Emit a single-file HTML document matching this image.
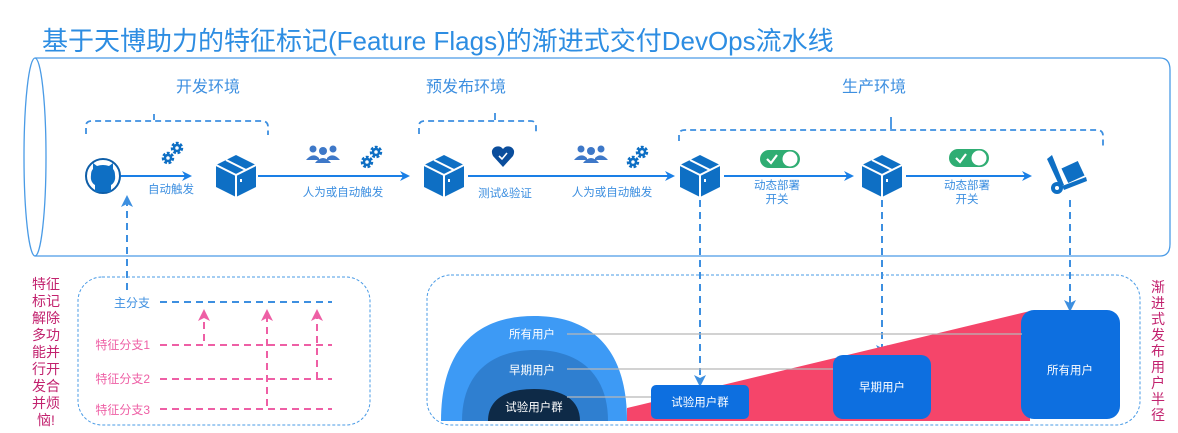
<!DOCTYPE html>
<html><head><meta charset="utf-8"><style>
html,body{margin:0;padding:0;background:#fff;}
svg{display:block;font-family:"Liberation Sans","Noto Sans CJK SC",sans-serif;}
</style></head><body>
<svg width="1178" height="433" viewBox="0 0 1178 433" xmlns="http://www.w3.org/2000/svg">
<defs>
<marker id="ab" markerWidth="10" markerHeight="10" refX="8" refY="5" orient="auto" markerUnits="userSpaceOnUse"><path d="M0,0 L10,5 L0,10 L3,5 Z" fill="#1a7fe6"/></marker>
<marker id="ap" markerWidth="12" markerHeight="12" refX="9" refY="6" orient="auto" markerUnits="userSpaceOnUse"><path d="M0,0 L12,6 L0,12 L3,6 Z" fill="#ee5fa5"/></marker>
<marker id="ad" markerWidth="12" markerHeight="12" refX="9" refY="6" orient="auto" markerUnits="userSpaceOnUse"><path d="M0,0 L12,6 L0,12 L3,6 Z" fill="#3d8fe0"/></marker>
<g id="box"><path d="M0,-20 L20,-10 L20,12 L0,22 L-20,12 L-20,-10 Z" fill="#0e6fc4"/><path d="M-20,-10 L0,0 L20,-10 M0,0 L0,22" stroke="#fff" stroke-width="2" fill="none"/><path d="M-10,-15 L10,-5" stroke="#fff" stroke-width="2"/><rect x="4" y="4" width="2" height="3" fill="#fff"/></g>
<g id="gear"><circle cx="0" cy="0" r="4.5" fill="none" stroke="#0e6fc4" stroke-width="3.5" stroke-dasharray="2.5 1.5"/><circle cx="0" cy="0" r="3" fill="none" stroke="#0e6fc4" stroke-width="2.5"/></g>
<g id="gears"><use href="#gear" x="5" y="-5"/><use href="#gear" x="-4" y="5"/></g>
<g id="ppl" fill="#3e78c8"><circle cx="-10" cy="-6" r="3.5"/><circle cx="10" cy="-6" r="3.5"/><circle cx="0" cy="-4" r="4"/><path d="M-17,5 Q-10,-3 -4,3 L-4,5Z M17,5 Q10,-3 4,3 L4,5Z"/><path d="M-8,8 Q0,-2 8,8Z"/></g>
<g id="tog"><rect x="-20" y="-9" width="40" height="18" rx="9" fill="#2fad73"/><circle cx="10" cy="0" r="7.5" fill="#fff"/><path d="M-13,0 L-9,4 L-3,-4" stroke="#fff" stroke-width="2.2" fill="none"/></g>
</defs>

<text x="42" y="50" font-size="26" fill="#2d8de2">基于天博助力的特征标记(Feature Flags)的渐进式交付DevOps流水线</text>

<!-- cylinder -->
<path d="M35,58 L1160,58 Q1170,58 1170,70 L1170,244 Q1170,256 1160,256 L35,256" fill="none" stroke="#4a9be6" stroke-width="1.3"/>
<ellipse cx="35" cy="157" rx="11" ry="99" fill="none" stroke="#4a9be6" stroke-width="1.3"/>

<g font-size="16" fill="#3d8fe0" text-anchor="middle">
<text x="208" y="92">开发环境</text><text x="466" y="92">预发布环境</text><text x="874" y="92">生产环境</text>
</g>
<g fill="none" stroke="#3d8fe0" stroke-width="1.8" stroke-dasharray="6 4">
<path d="M86,134 L86,126 Q86,121 92,121 L262,121 Q268,121 268,127 L268,135"/>
<path d="M419,134 L419,126 Q419,121 425,121 L531,121 Q536,121 536,127 L536,135"/>
<path d="M679,141 L679,135 Q679,130 685,130 L1097,130 Q1103,130 1103,136 L1103,147"/>
</g>
<path d="M154,114 L154,120 M495,113 L495,120 M891,117 L891,129" stroke="#3d8fe0" stroke-width="1.8"/>

<!-- main flow -->
<g stroke="#1a7fe6" stroke-width="2" fill="none" marker-end="url(#ab)">
<line x1="121" y1="176" x2="190" y2="176"/><line x1="258" y1="176" x2="408" y2="176"/>
<line x1="468" y1="176" x2="673" y2="176"/><line x1="724" y1="176" x2="852" y2="176"/><line x1="906" y1="176" x2="1030" y2="176"/>
</g>
<circle cx="103" cy="176" r="17" fill="#fff" stroke="#0e5ea8" stroke-width="2"/>
<path d="M95,192 L95,185 Q90,182 91,175 Q91,171 93,169 L93,163 L97,166 Q103,164 109,166 L113,163 L113,169 Q115,171 115,175 Q116,182 111,185 L111,192 Z" fill="#0e6fc4"/>
<use href="#box" x="236" y="175"/><use href="#box" x="444" y="175"/><use href="#box" x="700" y="175"/><use href="#box" x="882" y="175"/>
<use href="#gears" x="172" y="153"/><use href="#gears" x="371" y="157"/><use href="#gears" x="637" y="157"/>
<use href="#ppl" x="323" y="155"/><use href="#ppl" x="591" y="155"/>
<path d="M503,167 L493,156 Q490,150 495,147 Q500,145 503,149 Q506,145 511,147 Q516,150 513,156 Z" fill="#0a4d9c"/>
<path d="M499,156 L502,159 L507,153" stroke="#fff" stroke-width="1.6" fill="none"/>
<use href="#tog" x="780" y="159"/><use href="#tog" x="969" y="158"/>
<!-- trolley -->
<g fill="#0e6fc4"><path d="M1047,159 L1052,155 L1064,185 L1060,187 Z"/><rect x="1064" y="164" width="18" height="16" transform="rotate(-25 1073 172)"/><path d="M1062,186 L1086,177 L1087,181 L1064,190Z"/><circle cx="1057" cy="188" r="6"/></g>
<circle cx="1057" cy="188" r="2" fill="#fff"/>

<g font-size="11.5" fill="#3d8fe0" text-anchor="middle">
<text x="171" y="193">自动触发</text><text x="343" y="196">人为或自动触发</text><text x="505" y="197">测试&amp;验证</text><text x="612" y="196">人为或自动触发</text>
<text x="777" y="189">动态部署</text><text x="777" y="203">开关</text><text x="967" y="189">动态部署</text><text x="967" y="203">开关</text>
</g>

<!-- dashed verticals -->
<g stroke="#3d8fe0" stroke-width="2" stroke-dasharray="7 5" fill="none">
<line x1="127" y1="290" x2="127" y2="198" marker-end="url(#ad)"/>
<line x1="700" y1="200" x2="700" y2="384" marker-end="url(#ad)"/>
<line x1="882" y1="200" x2="882" y2="354" marker-end="url(#ad)"/>
<line x1="1070" y1="200" x2="1070" y2="309" marker-end="url(#ad)"/>
</g>

<!-- left box -->
<rect x="78" y="277" width="292" height="148" rx="24" fill="none" stroke="#4a9be6" stroke-width="1" stroke-dasharray="3 2"/>
<text x="150" y="307" font-size="12" fill="#3d8fe0" text-anchor="end">主分支</text>
<line x1="160" y1="302" x2="332" y2="302" stroke="#3d8fe0" stroke-width="2" stroke-dasharray="7 5"/>
<g font-size="12" fill="#ee5fa5" text-anchor="end"><text x="150" y="349">特征分支1</text><text x="150" y="383">特征分支2</text><text x="150" y="414">特征分支3</text></g>
<g stroke="#ee5fa5" stroke-width="2" stroke-dasharray="7 5" fill="none">
<line x1="160" y1="345" x2="332" y2="345"/><line x1="160" y1="379" x2="332" y2="379"/><line x1="160" y1="409" x2="332" y2="409"/>
<line x1="204" y1="341" x2="204" y2="312" marker-end="url(#ap)"/>
<line x1="267" y1="406" x2="267" y2="312" marker-end="url(#ap)"/>
<line x1="317" y1="379" x2="317" y2="312" marker-end="url(#ap)"/>
</g>
<g font-size="14" fill="#c2226e" text-anchor="middle">
<text x="46" y="289">特征</text><text x="46" y="306">标记</text><text x="46" y="323">解除</text><text x="46" y="340">多功</text><text x="46" y="357">能并</text><text x="46" y="374">行开</text><text x="46" y="391">发合</text><text x="46" y="408">并烦</text><text x="46" y="425">恼!</text>
</g>

<!-- right box -->
<rect x="427" y="275" width="713" height="150" rx="24" fill="none" stroke="#4a9be6" stroke-width="1" stroke-dasharray="3 2"/>
<g font-size="14" fill="#c2226e" text-anchor="middle">
<text x="1158" y="292">渐</text><text x="1158" y="308">进</text><text x="1158" y="324">式</text><text x="1158" y="340">发</text><text x="1158" y="356">布</text><text x="1158" y="372">用</text><text x="1158" y="388">户</text><text x="1158" y="404">半</text><text x="1158" y="420">径</text>
</g>
<path d="M627,408 L1030,311 L1030,421 L627,421 Z" fill="#f5456a"/>
<path d="M441,421 C441,345 480,316 534,316 C588,316 627,345 627,421 Z" fill="#3d9af5"/>
<path d="M462,421 C462,375 490,350 535,350 C580,350 608,375 608,421 Z" fill="#2f7fd0"/>
<path d="M488,421 C488,400 505,389 534,389 C563,389 580,400 580,421 Z" fill="#0e2a47"/>
<rect x="651" y="385" width="98" height="34" rx="5" fill="#0d6fe0"/>
<rect x="833" y="355" width="98" height="64" rx="10" fill="#0d6fe0"/>
<rect x="1021" y="310" width="99" height="109" rx="13" fill="#0d6fe0"/>
<g stroke="#b8b8b8" stroke-width="1.2"><line x1="567" y1="334" x2="1022" y2="334"/><line x1="567" y1="369" x2="833" y2="369"/><line x1="567" y1="397" x2="651" y2="397"/></g>
<g font-size="11.5" fill="#fff" text-anchor="middle">
<text x="532" y="338">所有用户</text><text x="532" y="374">早期用户</text><text x="534" y="411">试验用户群</text>
<text x="700" y="406">试验用户群</text><text x="882" y="391">早期用户</text><text x="1070" y="374">所有用户</text>
</g>
</svg>
</body></html>
